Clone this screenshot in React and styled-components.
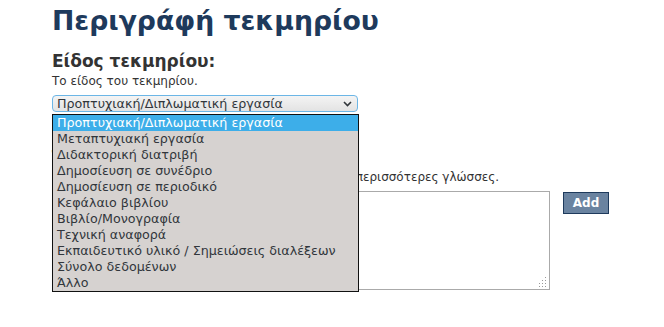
import React from "react";
import styled, { createGlobalStyle } from "styled-components";

const Global = createGlobalStyle`
  html, body { margin: 0; padding: 0; background: #fff; }
  body { font-family: "DejaVu Sans", "Noto Sans", sans-serif; color: #333; }
`;

const Page = styled.div`
  position: relative;
  width: 664px;
  height: 327px;
  overflow: hidden;
  padding: 5px 0 0 52px;
  box-sizing: border-box;
`;

const Title = styled.h1`
  margin: 0;
  font-size: 26.7px;
  line-height: 32px;
  font-weight: bold;
  color: #1e3a5c;
`;

const Field = styled.div`
  display: flex;
  flex-direction: column;
  align-items: flex-start;
  margin-top: ${(p) => p.$top || 0}px;
`;

const Label = styled.div`
  font-size: 17px;
  line-height: 20px;
  font-weight: bold;
  color: #333;
`;

const Help = styled.div`
  font-size: 12px;
  line-height: 16px;
  color: #333;
  margin-top: 2px;
  white-space: nowrap;
`;

const SelectBox = styled.div`
  margin-top: 6px;
  width: 306px;
  height: 17px;
  box-sizing: border-box;
  border: 1px solid #6cb6e6;
  border-radius: 4px;
  background: linear-gradient(#f4f4f4, #e3e3e3);
  display: flex;
  align-items: center;
  justify-content: space-between;
  padding: 0 5px 0 4px;
  font-size: 12.7px;
  color: #31363b;
`;

const Row = styled.div`
  display: flex;
  align-items: flex-start;
  gap: 13px;
  margin-top: 6px;
`;

const TextArea = styled.div`
  position: relative;
  width: 498px;
  height: 99px;
  box-sizing: border-box;
  border: 1px solid #aaa;
  background: #fff;
`;

const Grip = styled.svg`
  position: absolute;
  right: 2px;
  bottom: 2px;
`;

const AddButton = styled.button`
  margin-top: 1px;
  width: 46px;
  height: 22px;
  box-sizing: border-box;
  background: #6a83a0;
  border: 1px solid #1e3a5c;
  color: #fff;
  font-family: "DejaVu Sans", sans-serif;
  font-weight: bold;
  font-size: 12px;
  padding: 0;
`;

const Popup = styled.ul`
  position: absolute;
  left: 52px;
  top: 114px;
  width: 307px;
  margin: 0;
  padding: 0;
  list-style: none;
  box-sizing: border-box;
  border: 1px solid #111;
  background: #d6d2d0;
`;

const Option = styled.li`
  height: 16px;
  line-height: 16px;
  padding-left: 4px;
  font-size: 12.7px;
  white-space: nowrap;
  color: ${(p) => (p.$active ? "#fff" : "#31363b")};
  background: ${(p) => (p.$active ? "#3daee9" : "transparent")};
`;

const options = [
  "Προπτυχιακή/Διπλωματική εργασία",
  "Μεταπτυχιακή εργασία",
  "Διδακτορική διατριβή",
  "Δημοσίευση σε συνέδριο",
  "Δημοσίευση σε περιοδικό",
  "Κεφάλαιο βιβλίου",
  "Βιβλίο/Μονογραφία",
  "Τεχνική αναφορά",
  "Εκπαιδευτικό υλικό / Σημειώσεις διαλέξεων",
  "Σύνολο δεδομένων",
  "Άλλο",
];

function Chevron() {
  return (
    <svg width="9" height="6" viewBox="0 0 9 6">
      <path d="M1 1 L4.5 4.5 L8 1" fill="none" stroke="#31363b" strokeWidth="1.6" />
    </svg>
  );
}

export default function App() {
  return (
    <>
      <Global />
      <Page>
        <Title>Περιγράφή τεκμηρίου</Title>
        <Field $top={14}>
          <Label>Είδος τεκμηρίου:</Label>
          <Help>Το είδος του τεκμηρίου.</Help>
          <SelectBox>
            <span>Προπτυχιακή/Διπλωματική εργασία</span>
            <Chevron />
          </SelectBox>
        </Field>
        <Field $top={35}>
          <Label>Τίτλος:</Label>
          <Help>Ο τίτλος του τεκμηρίου, μπορεί να δοθεί σε μία ή περισσότερες γλώσσες.</Help>
          <Row>
            <TextArea>
              <Grip width="10" height="10" viewBox="0 0 10 10">
                {[
                  [8, 0], [8, 3], [5, 3], [8, 6], [5, 6], [2, 6], [8, 9], [5, 9], [2, 9], [-1, 9],
                ].map(([x, y], i) => (
                  <rect key={i} x={x} y={y} width="1" height="1" fill="#999" />
                ))}
              </Grip>
            </TextArea>
            <AddButton>Add</AddButton>
          </Row>
        </Field>
        <Popup>
          {options.map((o, i) => (
            <Option key={o} $active={i === 0}>{o}</Option>
          ))}
        </Popup>
      </Page>
    </>
  );
}
